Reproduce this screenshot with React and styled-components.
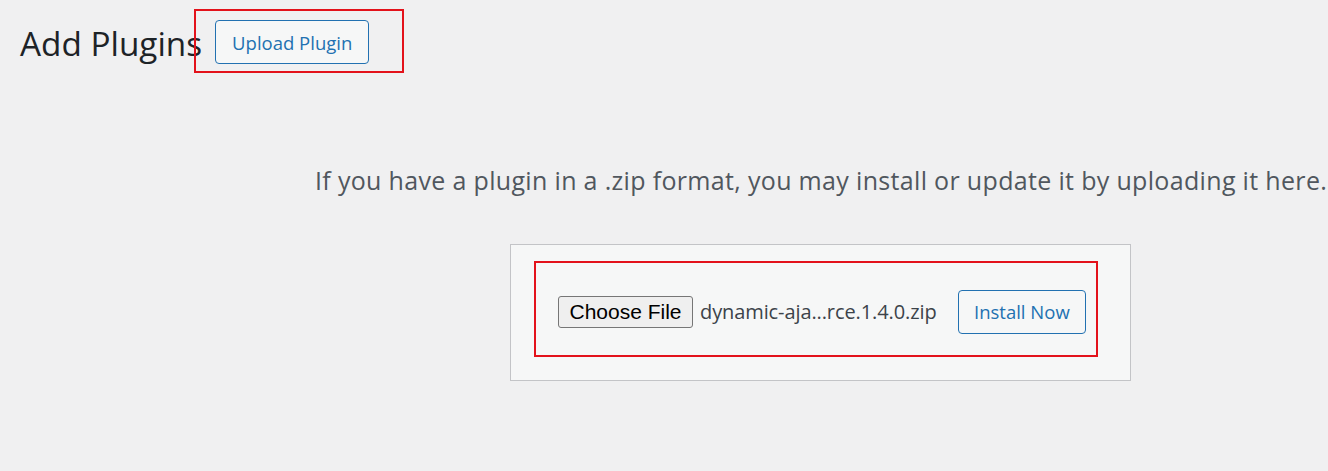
import React from "react"
import styled, { createGlobalStyle } from "styled-components"

const GlobalStyle = createGlobalStyle`
  html, body {
    margin: 0;
    padding: 0;
    background: #f0f0f1;
  }
  body {
    font-family: "Open Sans", "Noto Sans", sans-serif;
    color: #3c434a;
  }
`

const Page = styled.div`
  padding: 9px 20px 0;
  width: 1328px;
  height: 471px;
  box-sizing: border-box;
  overflow: hidden;
`

const Header = styled.div`
  display: flex;
  align-items: flex-start;
`

const Title = styled.h1`
  margin: 14px 0 0;
  font-size: 33.3px;
  font-weight: 400;
  line-height: 40px;
  color: #1d2327;
`

const Highlight = styled.div`
  border: 2px solid #e3121b;
  box-sizing: border-box;
  display: flex;
  align-items: flex-start;
  width: ${({ $w }) => $w}px;
  height: ${({ $h }) => $h}px;
  padding: ${({ $pad }) => $pad};
`

const HeaderHighlight = styled(Highlight)`
  margin-left: -8px;
`

const OutlineButton = styled.button`
  box-sizing: border-box;
  height: 44px;
  padding: 0 ${({ $px }) => $px}px;
  background: #f6f7f7;
  border: 1px solid #2271b1;
  border-radius: 4px;
  color: #2271b1;
  font-family: "Open Sans", "Noto Sans", sans-serif;
  font-size: 18.5px;
  cursor: pointer;
`

const Help = styled.p`
  margin: 91px 0 0 295px;
  white-space: nowrap;
  font-size: 25px;
  letter-spacing: 0.33px;
  color: #50575e;
  line-height: 32px;
`

const UploadBox = styled.div`
  margin: 48px 0 0 490px;
  width: 621px;
  height: 137px;
  box-sizing: border-box;
  border: 1px solid #c3c4c7;
  background: #f6f7f7;
  padding: 16px 0 0 23px;
`

const Row = styled(Highlight)`
  align-items: center;
`

const FileButton = styled.button`
  box-sizing: border-box;
  height: 32px;
  width: 135px;
  padding: 0;
  background: #efefef;
  border: 1px solid #767676;
  border-radius: 3px;
  color: #000;
  font-family: "Liberation Sans", Arial, sans-serif;
  font-size: 21px;
  cursor: pointer;
`

const FileName = styled.span`
  margin-left: 7px;
  width: 258px;
  font-size: 20px;
  letter-spacing: -0.1px;
  color: #3c434a;
`

const Upload = () => (
  <Page>
    <GlobalStyle />
    <Header>
      <Title>Add Plugins</Title>
      <HeaderHighlight $w={210} $h={64} $pad="9px 0 0 19px">
        <OutlineButton $px={16}>Upload Plugin</OutlineButton>
      </HeaderHighlight>
    </Header>
    <Help>If you have a plugin in a .zip format, you may install or update it by uploading it here.</Help>
    <UploadBox>
      <Row $w={564} $h={96} $pad="5px 0 0 22px">
        <FileButton>Choose File</FileButton>
        <FileName>dynamic-aja...rce.1.4.0.zip</FileName>
        <OutlineButton $px={15}>Install Now</OutlineButton>
      </Row>
    </UploadBox>
  </Page>
)

export default Upload
